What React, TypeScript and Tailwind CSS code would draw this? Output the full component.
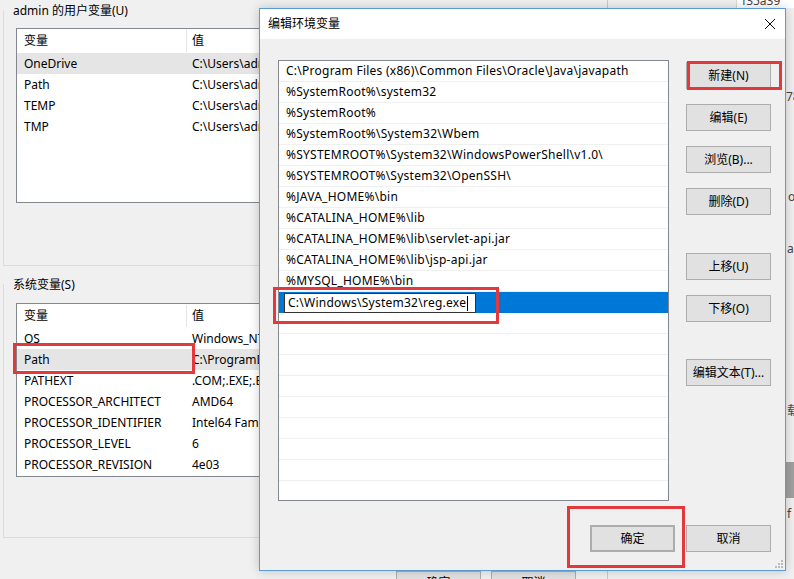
import React from "react";

const userRows: [string, string][] = [
  ["OneDrive", "C:\\Users\\admin\\OneDrive"],
  ["Path", "C:\\Users\\admin\\AppData\\Local\\Microsoft\\WindowsApps;"],
  ["TEMP", "C:\\Users\\admin\\AppData\\Local\\Temp"],
  ["TMP", "C:\\Users\\admin\\AppData\\Local\\Temp"],
];

const sysRows: [string, string][] = [
  ["OS", "Windows_NT"],
  ["Path", "C:\\ProgramData\\Oracle\\Java\\javapath;"],
  ["PATHEXT", ".COM;.EXE;.BAT;.CMD;.VBS;.VBE;.JS;.JSE;.WSF;.WSH;.MSC"],
  ["PROCESSOR_ARCHITECT", "AMD64"],
  ["PROCESSOR_IDENTIFIER", "Intel64 Family 6 Model 78 Stepping 3, GenuineIntel"],
  ["PROCESSOR_LEVEL", "6"],
  ["PROCESSOR_REVISION", "4e03"],
];

const paths = [
  "C:\\Program Files (x86)\\Common Files\\Oracle\\Java\\javapath",
  "%SystemRoot%\\system32",
  "%SystemRoot%",
  "%SystemRoot%\\System32\\Wbem",
  "%SYSTEMROOT%\\System32\\WindowsPowerShell\\v1.0\\",
  "%SYSTEMROOT%\\System32\\OpenSSH\\",
  "%JAVA_HOME%\\bin",
  "%CATALINA_HOME%\\lib",
  "%CATALINA_HOME%\\lib\\servlet-api.jar",
  "%CATALINA_HOME%\\lib\\jsp-api.jar",
  "%MYSQL_HOME%\\bin",
];

function VarList({
  rows,
  selected,
  className,
}: {
  rows: [string, string][];
  selected: number;
  className: string;
}) {
  return (
    <div className={"ml-[12px] w-[250px] border border-[#828790] bg-white overflow-hidden " + className}>
      <div className="flex h-[24px] items-center">
        <div className="flex h-[22px] w-[170px] shrink-0 items-center border-r border-[#e5e5e5] pl-[7px]">变量</div>
        <div className="pl-[5px]">值</div>
      </div>
      {rows.map(([k, v], i) => (
        <div
          key={i}
          className={`flex h-[21px] items-center whitespace-nowrap ${i === selected ? "bg-[#e5e5e5]" : ""}`}
        >
          <div className="w-[170px] shrink-0 overflow-hidden pl-[7px]">{k}</div>
          <div className="w-[78px] shrink-0 overflow-hidden pl-[5px]">{v}</div>
        </div>
      ))}
    </div>
  );
}

function WinButton({ children, className }: { children: React.ReactNode; className: string }) {
  return (
    <div
      className={
        "flex h-[27px] w-[85px] shrink-0 items-center justify-center border border-[#adadad] bg-[#e1e1e1] " +
        className
      }
    >
      {children}
    </div>
  );
}

export default function App() {
  const emptyRows = Array.from({ length: 10 });
  return (
    <div className="relative h-[579px] w-[794px] overflow-hidden bg-[#f0f0f0] font-['Segoe_UI','Noto_Sans','Noto_Sans_CJK_SC',sans-serif] text-[12px] text-black">
      {/* background: environment variables window */}
      <div className="flex w-[700px] flex-col pl-[3px]">
        <div className="mt-[10px] border-b border-l border-[#dcdcdc] pb-[62px]">
          <div className="-mt-[7px] ml-[8px] w-fit px-[1px] leading-[15px]">admin 的用户变量(U)</div>
          <VarList rows={userRows} selected={0} className="mt-[10px] h-[175px]" />
        </div>
        <div className="mt-[18px] border-b border-l border-[#dcdcdc] pb-[60px]">
          <div className="-mt-[7px] ml-[8px] w-fit px-[1px] leading-[15px]">系统变量(S)</div>
          <VarList rows={sysRows} selected={1} className="mt-[11px] h-[174px]" />
        </div>
        <div className="ml-[393px] mt-[33px] flex gap-[10px]">
          <div className="flex h-[23px] w-[85px] items-center justify-center border border-[#adadad] bg-[#e1e1e1]">确定</div>
          <div className="flex h-[23px] w-[85px] items-center justify-center border border-[#adadad] bg-[#e1e1e1]">取消</div>
        </div>
      </div>

      {/* background: another window on the right */}
      <div className="absolute left-[607px] top-0 h-[579px] w-[187px] border-l border-[#c9c9c9] bg-[#f0f0f0]">
        <div className="absolute left-[128px] top-0 h-[8px] w-[59px] border-l border-[#d9d9d9] bg-white" />
        <span className="absolute left-[134px] top-[-8px] text-[#444]">f35a39</span>
        <span className="absolute left-[178px] top-[88px] text-[#444]">78</span>
        <span className="absolute left-[180px] top-[188px] text-[#444]">o</span>
        <span className="absolute left-[179px] top-[240px] text-[#444]">a</span>
        <span className="absolute left-[179px] top-[402px] text-[#444]">载</span>
        <div className="absolute left-[178px] top-[462px] h-[36px] w-[9px] bg-[#a0a0a0]" />
        <span className="absolute left-[179px] top-[505px] text-[#444]">f</span>
      </div>

      {/* dialog: 编辑环境变量 */}
      <div className="absolute left-[259px] top-[8px] flex h-[563px] w-[527px] flex-col border border-[#5b9bd5] bg-[#f0f0f0] shadow-[0_0_10px_rgba(0,0,0,0.2)]">
        <div className="flex h-[30px] shrink-0 items-center justify-between bg-white pl-[8px] pr-[10px]">
          <span>编辑环境变量</span>
          <svg width="10" height="10" viewBox="0 0 10 10">
            <path d="M0 0 L10 10 M10 0 L0 10" stroke="#000" strokeWidth="1" fill="none" />
          </svg>
        </div>
        <div className="flex pl-[18px] pt-[21px]">
          <div className="h-[441px] w-[391px] overflow-hidden border border-[#828790] bg-white tracking-[0.25px]">
            {paths.map((p, i) => (
              <div key={i} className="flex h-[21px] items-center whitespace-nowrap border-b border-[#f0f0f0] pl-[7px]">
                {p}
              </div>
            ))}
            <div className="flex h-[21px] items-end bg-[#0078d7] pl-[5px]">
              <div className="flex h-[20px] w-[192px] items-center whitespace-nowrap border border-[#333] bg-white pl-[3px]">
                C:\Windows\System32\reg.exe
                <span className="ml-[1px] inline-block h-[15px] w-[1px] bg-black" />
              </div>
            </div>
            {emptyRows.map((_, i) => (
              <div key={i} className="h-[21px] border-b border-[#f0f0f0]" />
            ))}
          </div>
          <div className="ml-[17px] flex w-[85px] flex-col pt-[2px]">
            <WinButton className="">新建(N)</WinButton>
            <WinButton className="mt-[15px]">编辑(E)</WinButton>
            <WinButton className="mt-[15px]">浏览(B)...</WinButton>
            <WinButton className="mt-[15px]">删除(D)</WinButton>
            <WinButton className="mt-[38px]">上移(U)</WinButton>
            <WinButton className="mt-[15px]">下移(O)</WinButton>
            <WinButton className="mt-[37px]">编辑文本(T)...</WinButton>
          </div>
        </div>
        <div className="mt-[24px] flex justify-end gap-[11px] pr-[14px]">
          <WinButton className="border-2 border-[#0078d7]">确定</WinButton>
          <WinButton className="">取消</WinButton>
        </div>
        <svg className="absolute bottom-[2px] right-[2px]" width="10" height="10" viewBox="0 0 10 10">
          <rect x="8" y="2" width="2" height="2" fill="#bcbcbc" />
          <rect x="5" y="5" width="2" height="2" fill="#bcbcbc" />
          <rect x="8" y="5" width="2" height="2" fill="#bcbcbc" />
          <rect x="2" y="8" width="2" height="2" fill="#bcbcbc" />
          <rect x="5" y="8" width="2" height="2" fill="#bcbcbc" />
          <rect x="8" y="8" width="2" height="2" fill="#bcbcbc" />
        </svg>
      </div>

      {/* red annotation boxes */}
      <div className="absolute left-[13px] top-[343px] h-[31px] w-[182px] border-[3px] border-[#e4393c]" />
      <div className="absolute left-[687px] top-[61px] h-[29px] w-[95px] border-[3px] border-[#e4393c]" />
      <div className="absolute left-[273px] top-[287px] h-[37px] w-[226px] border-[3px] border-[#e4393c]" />
      <div className="absolute left-[567px] top-[506px] h-[62px] w-[118px] border-[3px] border-[#e4393c]" />
    </div>
  );
}
